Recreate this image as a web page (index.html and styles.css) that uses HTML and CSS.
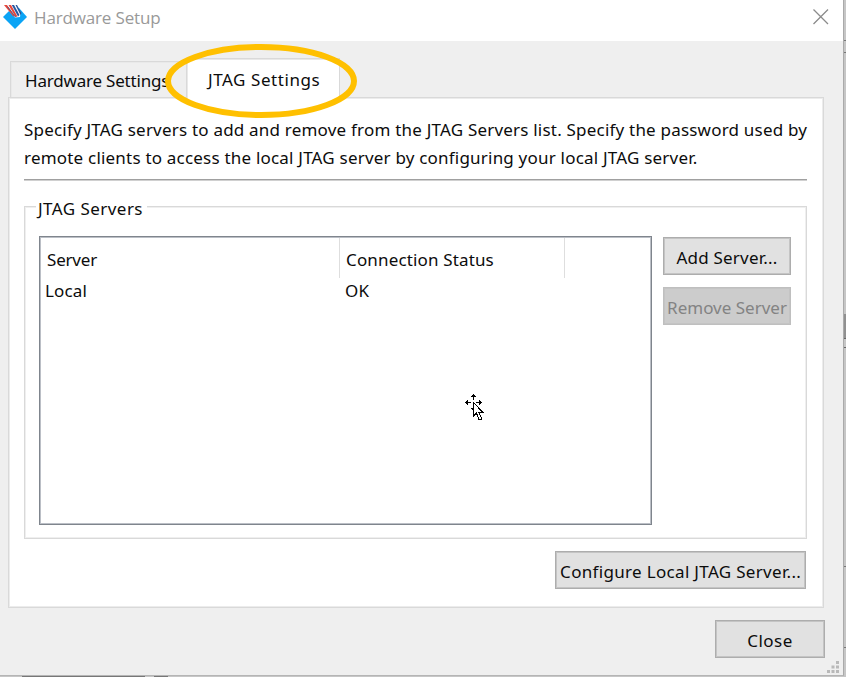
FILE: index.html
```html
<!DOCTYPE html>
<html lang="en">
<head>
<meta charset="utf-8">
<title>Hardware Setup</title>
<link rel="stylesheet" href="styles.css">
</head>
<body>
<div class="desktop">
<main class="window">
  <header class="titlebar">
    <svg class="logo" width="24" height="26" viewBox="0 0 24 26">
      <path d="M0 13 6 7 16 4 24 13 12 25Z" fill="#0ba4f5"/>
      <path d="M1 1H13L17.500 8 17 13 12 13.500Z" fill="#fff"/>
      <path d="M1 1H4L12 12.500 10 12Z" fill="#e8453a"/>
      <path d="M5.500 1H8L14.500 12.500 12.500 13Z" fill="#e8453a"/>
      <path d="M4.500 2.500 12.500 13" stroke="#2b5796" stroke-width=".8"/>
      <path d="M8.800 1H11L16.500 11 15 12.500Z" fill="#2757a0"/>
      <path d="M12.500 1H14L18.500 9 17.500 11Z" fill="#2757a0"/>
    </svg>
    <h1>Hardware Setup</h1>
    <svg class="x" width="18" height="18" viewBox="0 0 18 18"><path d="M1.500 1.500 16 16M16 1.500 1.500 16" stroke="#8b8b8b" stroke-width="1.300"/></svg>
  </header>
  <nav class="tabs">
    <div class="tab"><span class="t-hw">Hardware Settings</span></div>
    <div class="tab active"><span class="t-jtag">JTAG Settings</span>
      <svg class="ring" width="194" height="76" viewBox="0 0 194 76"><ellipse cx="97" cy="38" rx="93" ry="34" fill="none" stroke="#ffc000" stroke-width="6"/></svg>
    </div>
  </nav>
  <section class="panel">
    <p class="intro"><span class="l1">Specify JTAG servers to add and remove from the JTAG Servers list. Specify the password used by</span><br><span class="l2">remote clients to access the local JTAG server by configuring your local JTAG server.</span></p>
    <div class="group">
      <h2><span class="t-legend">JTAG Servers</span></h2>
      <div class="group-body">
        <div class="table">
          <div class="row head"><div><span class="t-server">Server</span></div><div><span class="t-status">Connection Status</span></div><div></div></div>
          <div class="row"><div><span class="t-local">Local</span></div><div><span class="t-ok">OK</span></div><div></div></div>
          <svg class="cursor" width="20" height="30" viewBox="0 0 20 30" shape-rendering="crispEdges">
            <path d="M9 1h1v1h1v1h1v1h-2v3h-1V4H7V3h1V2h1zM1 9h1V8h1V7h1v2h3v1H4v2H3v-1H2v-1H1zM18 9h-1V8h-1V7h-1v2h-3v1h3v2h1v-1h1v-1h1zM7 15h2v2H8v-1H7z" fill="#000"/>
            <path d="M9.500 9.500V23L12.500 20 15 27 18 26 15 19.500H19Z" fill="#fff" stroke="#000" stroke-width="1"/>
          </svg>
        </div>
        <div class="actions">
          <button><span class="t-add">Add Server...</span></button>
          <button class="off" disabled><span class="t-remove">Remove Server</span></button>
        </div>
      </div>
    </div>
    <button class="configure"><span class="t-conf">Configure Local JTAG Server...</span></button>
  </section>
  <footer>
    <button class="close"><span class="t-close">Close</span></button>
    <svg class="grip" width="12" height="12" viewBox="0 0 12 12" fill="#b9b9b9"><path d="M9 0h3v3H9zM9 4.500h3v3H9zM4.500 4.500h3v3h-3zM0 9h3v3H0zM4.500 9h3v3h-3zM9 9h3v3H9z"/></svg>
  </footer>
</main>
</div>
</body>
</html>
```
FILE: styles.css
```css
* { box-sizing: border-box; margin: 0; padding: 0; }
body { width: 846px; height: 678px; overflow: hidden; background: #fff; }
.desktop {
  width: 846px; height: 677px;
  background:
    linear-gradient(#777, #777) 844px 40px / 2px 1px no-repeat,
    linear-gradient(#777, #777) 844px 52px / 2px 1px no-repeat,
    linear-gradient(#909090, #909090) 844px 314px / 2px 24px no-repeat,
    linear-gradient(#666, #666) 844px 338px / 2px 1px no-repeat,
    linear-gradient(#666, #666) 844px 347px / 2px 1px no-repeat,
    linear-gradient(#777, #777) 844px 566px / 2px 1px no-repeat,
    linear-gradient(#777, #777) 844px 647px / 2px 1px no-repeat,
    linear-gradient(#777, #777) 22px 676px / 123px 1px no-repeat,
    linear-gradient(#777, #777) 154px 676px / 14px 1px no-repeat,
    #c6c6c6;
}
.window {
  width: 844px; height: 676px;
  display: flex; flex-direction: column;
  background: #efefef;
  border-right: 1px solid #aaa; border-bottom: 1px solid #b5b5b5;
  font: 17px/28px "Noto Sans", sans-serif; color: #0c0c0c;
}
span { white-space: nowrap; }
.titlebar { height: 41px; background: #fff; display: flex; align-items: flex-start; padding: 4px 13px 0 3px; }
.titlebar h1 { flex: 1; margin-left: 7px; font: 17px/28px "Open Sans", sans-serif; letter-spacing: -.15px; color: #999; }
.x { margin-top: 4px; }
.tabs { display: flex; align-items: flex-end; height: 57px; padding-left: 10px; }
.tab { width: 176px; height: 37px; border: 1px solid #d9d9d9; border-right: 0; border-bottom: 0; box-shadow: inset 1px 1px #e9e9e9; padding: 5px 0 0 14px; }
.active {
  position: relative; z-index: 1; width: 154px; height: 41px; margin-bottom: -1px;
  background: #fff; border-right: 1px solid #d9d9d9; padding: 7px 0 0 21px;
}
.ring { position: absolute; left: -23px; top: -16px; }
.panel {
  width: 816px; height: 511px; margin: -1px 0 0 8px; padding: 18px 16px 0 15px;
  background: #fff; border: 1px solid #d9d9d9; box-shadow: inset 0 0 0 1px #ececec;
  display: flex; flex-direction: column;
}
.intro { height: 64px; border-bottom: 1px solid #a0a0a0; box-shadow: 0 1px #d0d0d0; }
.l1, .l2 { letter-spacing: .205px; }
.t-jtag { letter-spacing: .56px; }
.t-legend { letter-spacing: .45px; }
.t-conf { letter-spacing: .32px; margin-right: -.32px; }
.t-status { letter-spacing: .15px; }
.t-add { letter-spacing: .2px; }
.t-hw { letter-spacing: -.2px; }
.t-local, .t-ok { letter-spacing: .15px; }
.t-server { letter-spacing: -.2px; }
.t-close { letter-spacing: .5px; }
.group { margin-top: 26px; height: 333px; border: 1px solid #d9d9d9; box-shadow: inset 0 0 0 1px #efefef; }
.group h2 { width: 111px; height: 28px; margin: -12px 0 0 11px; padding-left: 2px; background: #fff; font: inherit; }
.group-body { display: flex; gap: 11px; margin: 13px 0 0 14px; }
.table { position: relative; width: 613px; height: 289px; border: 1px solid #7f858d; box-shadow: inset 0 0 0 1px #bbbfc6; padding: 1px; }
.row { display: grid; grid-template-columns: 299px 225px 1fr; }
.row > div { padding: 0 0 0 4px; }
.row:not(.head) { line-height: 26px; }
.row > div + div { padding-left: 5px; }
.head { height: 40px; line-height: 44px; }
.head > div, .head > div + div { height: 40px; padding-left: 6px; border-right: 1px solid #dedede; }
.head > div:last-child { border: 0; }
.cursor { position: absolute; left: 424px; top: 156px; }
.actions { display: flex; flex-direction: column; gap: 12px; padding-top: 1px; }
button {
  display: flex; justify-content: center; align-items: center;
  width: 128px; height: 38px; border: 1px solid #adadad; box-shadow: inset 0 0 0 1px #c4c4c4; background: #e1e1e1;
  font: inherit; color: #0c0c0c; padding-top: 3px;
}
.off { background: #ccc; border-color: #bfbfbf; color: #838383; }
.configure { width: 251px; margin-top: 12px; margin-right: 1px; align-self: flex-end; }
footer { display: flex; justify-content: flex-end; align-items: flex-start; padding-top: 12px; }
.close { width: 110px; }
.grip { margin: 41px 4px 0 2px; }
```
